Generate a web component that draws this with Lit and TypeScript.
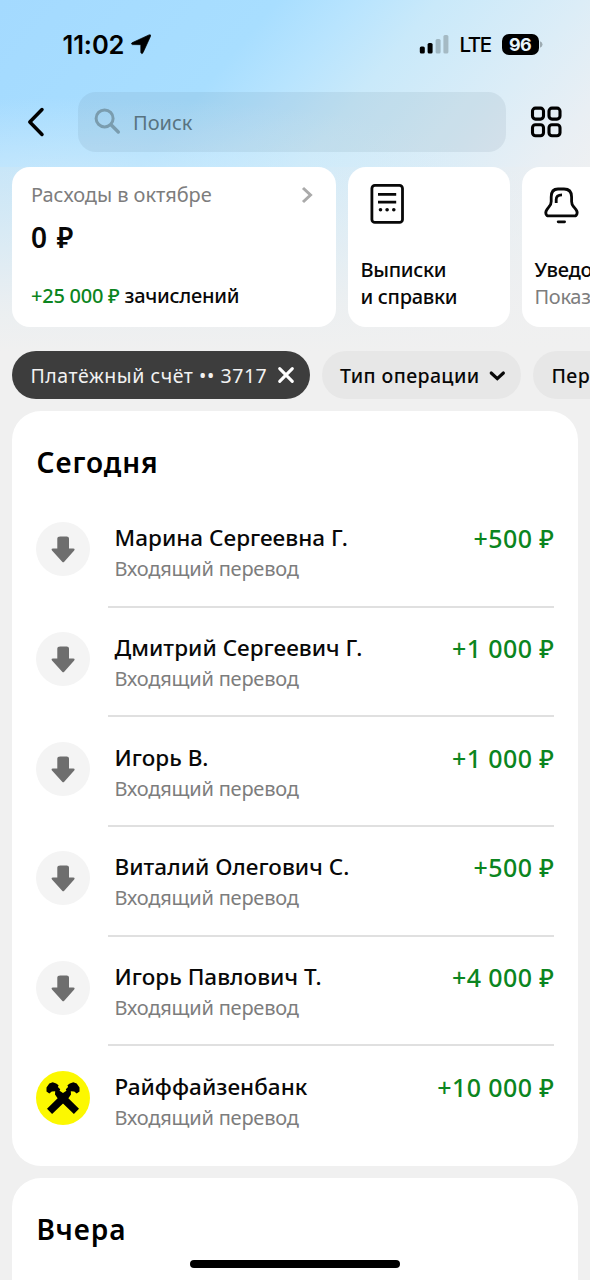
import { LitElement, html, css, svg } from "lit";
import { customElement, property } from "lit/decorators.js";

interface Operation {
  name: string;
  amount: string;
  bank?: boolean;
}

const OPERATIONS: Operation[] = [
  { name: "Марина Сергеевна Г.", amount: "+500 ₽" },
  { name: "Дмитрий Сергеевич Г.", amount: "+1 000 ₽" },
  { name: "Игорь В.", amount: "+1 000 ₽" },
  { name: "Виталий Олегович С.", amount: "+500 ₽" },
  { name: "Игорь Павлович Т.", amount: "+4 000 ₽" },
  { name: "Райффайзенбанк", amount: "+10 000 ₽", bank: true },
];

const arrowDown = svg`<path d="M24.3 14.4 H30.7 Q33 14.4 33 16.6 V26.6 H37.3 Q39.4 26.8 38.2 28.4 L28.2 39.8 Q27.2 40.9 26.2 39.8 L16 28.4 Q14.8 26.8 16.9 26.6 H21.3 V16.6 Q21.3 14.4 24.3 14.4Z" fill="#6e6e6e"/>`;

const HORSE =
  "M10.5 20.6 V16.6 L13.3 12.5 L16.7 11.2 L20.2 12.4 L22.6 14.2 L21.9 16 L24.2 18.2 L23.6 19.8 L27 22 L43 37.8 L37.9 42.9 L21.8 27.6 L19 23.4 L19.2 20.2 L15.8 20.4 L13.3 22.4Z";

const crossedHorses = svg`<g fill="#000">
  <path d=${HORSE} />
  <path transform="translate(54 0) scale(-1 1)" d=${HORSE} />
</g>`;

@customElement("operation-row")
export class OperationRow extends LitElement {
  @property({ attribute: false }) operation!: Operation;
  @property({ type: Boolean }) last = false;

  static styles = css`
    :host {
      display: block;
      height: 109.67px;
    }
    .row {
      display: flex;
      height: 100%;
      box-sizing: border-box;
      padding-left: 24px;
    }
    .badge {
      flex: none;
      width: 54px;
      height: 54px;
      margin-top: 24.4px;
    }
    .body {
      flex: 1;
      display: flex;
      justify-content: space-between;
      box-sizing: border-box;
      margin: 0 24px 0 18px;
      padding: 24.4px 0 0 6.5px;
      border-bottom: 2px solid #e0e0e0;
      white-space: nowrap;
    }
    .body.last {
      border-bottom-color: transparent;
    }
    .name {
      font-size: 22.5px;
      line-height: 32px;
      font-weight: 500;
      letter-spacing: 0.03px;
      color: #080808;
    }
    .kind {
      font-size: 20px;
      line-height: 30.4px;
      letter-spacing: -0.2px;
      color: #7d7d7d;
    }
    .amount {
      font-size: 25px;
      line-height: 32px;
      font-weight: 500;
      letter-spacing: 0.4px;
      margin-right: -0.4px;
      color: #0b8520;
    }
  `;

  render() {
    const op = this.operation;
    return html`<div class="row">
      <svg class="badge" viewBox="0 0 54 54">
        <circle cx="27" cy="27" r="27" fill=${op.bank ? "#fcf800" : "#f4f4f4"} />
        ${op.bank ? crossedHorses : arrowDown}
      </svg>
      <div class="body ${this.last ? "last" : ""}">
        <div>
          <div class="name">${op.name}</div>
          <div class="kind">Входящий перевод</div>
        </div>
        <div class="amount">${op.amount}</div>
      </div>
    </div>`;
  }
}

@customElement("app-root")
export class AppRoot extends LitElement {
  static styles = css`
    :host {
      display: block;
      position: relative;
      width: 590px;
      height: 1280px;
      overflow: hidden;
      background: #f0f0f0;
      font-family: "Noto Sans", "Open Sans", sans-serif;
      color: #080808;
      white-space: nowrap;
    }
    svg { display: block; flex: none; }
    .top {
      height: 167px;
      background:
        radial-gradient(ellipse 75% 50% at 12% 108%, rgba(222, 240, 250, 0.6) 0%, rgba(222, 240, 250, 0) 100%),
        linear-gradient(130deg, #a4daff 0%, #a8deff 38%, #b8e4fe 49%, #c9e9fa 60%, #dcedf7 80%, #e9eff4 93%, #eef0f2 100%);
    }
    .status {
      height: 92px;
      box-sizing: border-box;
      padding: 30px 47px 0 62.5px;
      display: flex;
      align-items: flex-start;
      font-family: Inter, sans-serif;
      color: #000;
    }
    .time {
      font-size: 25.5px;
      line-height: 30px;
      font-weight: 600;
      letter-spacing: -0.1px;
      width: 68px;
    }
    .locate { margin-top: 4px; }
    .signal { margin-left: auto; margin-top: 5px; }
    .lte {
      font-size: 20.5px;
      line-height: 30px;
      font-weight: 500;
      letter-spacing: -1.4px;
      margin-left: 10.5px;
      width: 42px;
    }
    .battery {
      width: 37px;
      height: 21px;
      margin-top: 3.5px;
      border-radius: 7px;
      background: #000;
      color: #e8f5fd;
      font-size: 18px;
      line-height: 21px;
      letter-spacing: -0.6px;
      font-weight: 700;
      text-align: center;
    }
    .cap { margin: 11px 0 0 1.5px; }
    .bar {
      display: flex;
      align-items: center;
      height: 60px;
      padding: 0 27px 0 26px;
    }
    .search {
      display: flex;
      align-items: center;
      box-sizing: border-box;
      width: 428px;
      height: 60px;
      margin: 0 24px 0 32px;
      padding-left: 16px;
      gap: 11px;
      border-radius: 18px;
      background: rgba(80, 110, 125, 0.1);
      color: #587380;
      font-size: 20px;
    }
    .panel {
      height: 184px;
      background:
        linear-gradient(180deg, rgba(240, 240, 240, 0) 0%, rgba(240, 240, 240, 0.85) 75%, #f0f0f0 100%),
        linear-gradient(90deg, #c8e6f8 0%, #d4ebf8 55%, #eceff2 95%);
    }
    .cards {
      display: flex;
      gap: 12px;
      padding-left: 12px;
    }
    .card {
      flex: none;
      box-sizing: border-box;
      height: 160px;
      border-radius: 18px;
      background: #fff;
      font-size: 20px;
      line-height: 27px;
      font-weight: 500;
      letter-spacing: -0.3px;
    }
    .spend {
      width: 324px;
      padding: 13.5px 22px 0 19px;
    }
    .spend-head {
      display: flex;
      align-items: center;
      justify-content: space-between;
      color: #7d7d7d;
      font-weight: 400;
      letter-spacing: -0.05px;
    }
    .spend-head svg { margin-top: 1px; }
    .total {
      font-size: 28px;
      line-height: 38px;
      font-weight: 600;
      letter-spacing: 0;
      word-spacing: 2.5px;
      margin-top: 10.5px;
    }
    .income { margin-top: 26px; letter-spacing: -0.25px; }
    .green { color: #0b8520; }
    .grey { color: #7d7d7d; font-weight: 400; }
    .tile { width: 162px; padding: 16px 0 0 12.5px; }
    .tile svg { margin: 0 0 31px 8.5px; }
    .filters {
      display: flex;
      gap: 12px;
      padding: 0 0 12px 12px;
    }
    .pill {
      flex: none;
      display: flex;
      align-items: center;
      justify-content: space-between;
      box-sizing: border-box;
      height: 48px;
      padding: 0 15px 0 18px;
      border-radius: 24px;
      background: #e7e7e7;
      font-size: 19.5px;
      letter-spacing: 0.4px;
      font-weight: 500;
    }
    .account {
      width: 298px;
      padding-left: 18.5px;
      background: #3d3d3d;
      color: #f2f2f2;
      font-weight: 400;
      letter-spacing: 0.56px;
    }
    .type { width: 199px; }
    .period { width: 150px; padding-left: 18.5px; }
    .group {
      width: 566px;
      height: 755px;
      margin: 0 0 12px 12px;
      box-sizing: border-box;
      padding-top: 31px;
      border-radius: 29px;
      background: #fff;
    }
    .day {
      margin-left: 24.5px;
      font-size: 28px;
      line-height: 40px;
      height: 56px;
      font-weight: 600;
      letter-spacing: 0.95px;
      color: #000;
    }
    .home {
      position: absolute;
      left: 190px;
      bottom: 12px;
      width: 210px;
      height: 8px;
      border-radius: 4px;
      background: #000;
    }
  `;

  render() {
    return html`
      <header class="top">
        <div class="status">
          <span class="time">11:02</span>
          <svg class="locate" width="21" height="22" viewBox="0 0 21 22">
            <path stroke="#000" stroke-width=".7" d="M1 8.8 L18 .9 Q20.2 .2 19.5 2.3 L12 18.7 Q10.7 20.7 9.8 18.5 V11.3 Q9.8 10.7 9.2 10.7 L1.4 10.6 Q-.2 10 1 8.8Z" />
          </svg>
          <svg class="signal" width="30" height="19" viewBox="0 0 30 19">
            <rect x="0.8" y="11.5" width="5" height="7" rx="1.6" />
            <rect x="8.6" y="8" width="5" height="10.5" rx="1.6" />
            <rect x="16.6" y="4" width="5" height="14.5" rx="1.6" fill="#9fb7c3" />
            <rect x="24.4" y="0" width="5" height="18.5" rx="1.6" fill="#a5bac4" />
          </svg>
          <span class="lte">LTE</span>
          <span class="battery">96</span>
          <svg class="cap" width="3" height="7" viewBox="0 0 3 7">
            <path d="M0 .3Q2.5 1.2 2.5 3.5Q2.5 5.8 0 6.7Z" fill="#9dabb2" />
          </svg>
        </div>
        <div class="bar">
          <svg width="20" height="30" viewBox="0 0 20 30" fill="none" stroke="#000" stroke-width="3.5" stroke-linecap="round" stroke-linejoin="round">
            <path d="M16 2.5 L3.8 15 L16 27.5" />
          </svg>
          <div class="search">
            <svg width="28" height="28" viewBox="0 0 28 28" fill="none" stroke="#7a9cae" stroke-linecap="round">
              <circle cx="10.6" cy="10.4" r="8.5" stroke-width="3" />
              <path d="M17.3 17 L24.3 24" stroke-width="3.4" />
            </svg>
            <span>Поиск</span>
          </div>
          <svg width="32" height="32" viewBox="0 0 32 32" fill="none" stroke="#000" stroke-width="3.1">
            <rect x="2.5" y="2.1" width="11" height="11" rx="3" />
            <rect x="19" y="2.1" width="11" height="11" rx="3" />
            <rect x="2.5" y="18.8" width="11" height="11" rx="3" />
            <rect x="19" y="18.8" width="11" height="11" rx="3" />
          </svg>
        </div>
      </header>

      <section class="panel">
        <div class="cards">
          <div class="card spend">
            <div class="spend-head">
              <span>Расходы в октябре</span>
              <svg width="14" height="18" viewBox="0 0 14 18" fill="none" stroke="#aaa" stroke-width="3">
                <path d="M3 2 L10.5 9 L3 16" />
              </svg>
            </div>
            <div class="total">0 ₽</div>
            <div class="income"><span class="green">+25 000 ₽</span> зачислений</div>
          </div>
          <div class="card tile">
            <svg width="36" height="42" viewBox="0 0 36 42" fill="none" stroke="#080808" stroke-width="2.8">
              <rect x="2.9" y="2.4" width="30.6" height="37" rx="3" />
              <path d="M9 11.4 H27.2 M9 19.2 H27.2" />
              <g fill="#080808" stroke="none">
                <circle cx="11.5" cy="26.8" r="1.8" /><circle cx="18.1" cy="26.8" r="1.8" /><circle cx="24.8" cy="26.8" r="1.8" />
              </g>
            </svg>
            <div>Выписки</div>
            <div>и справки</div>
          </div>
          <div class="card tile">
            <svg width="36" height="42" viewBox="0 0 36 42" fill="none" stroke="#080808" stroke-width="2.8" stroke-linejoin="round">
              <path d="M15 6 H21 Q28.6 6 28.6 14 V18.5 Q28.6 21.5 30.6 23.7 L33 26.6 Q35.4 30 32.8 32.8 H4.2 Q1.5 30 3.9 26.6 L6 23.7 Q8.2 21.5 8.2 18.5 V14 Q8.2 6 15 6Z" />
              <path d="M13.2 20 V16.5 Q13.2 11.8 19 11.8" />
              <path d="M15.2 38.8 H21.6" stroke-linecap="round" />
            </svg>
            <div>Уведомления</div>
            <div class="grey">Показать</div>
          </div>
        </div>
      </section>

      <nav class="filters">
        <div class="pill account">
          <span>Платёжный счёт •• 3717</span>
          <svg width="18" height="18" viewBox="0 0 18 18" fill="none" stroke="#fff" stroke-width="3.1" stroke-linecap="round">
            <path d="M2.7 2.7 L15.3 15.3 M15.3 2.7 L2.7 15.3" />
          </svg>
        </div>
        <div class="pill type">
          <span>Тип операции</span>
          <svg width="18" height="12" viewBox="0 0 18 12" fill="none" stroke="#080808" stroke-width="3.1">
            <path d="M3.2 4 L9.3 9.7 L15.4 4" stroke-linecap="round" />
          </svg>
        </div>
        <div class="pill period"><span>Период</span></div>
      </nav>

      <section class="group">
        <div class="day">Сегодня</div>
        ${OPERATIONS.map(
          (op, i) => html`<operation-row .operation=${op} ?last=${i === OPERATIONS.length - 1}></operation-row>`
        )}
      </section>
      <section class="group">
        <div class="day">Вчера</div>
      </section>
      <div class="home"></div>
    `;
  }
}
